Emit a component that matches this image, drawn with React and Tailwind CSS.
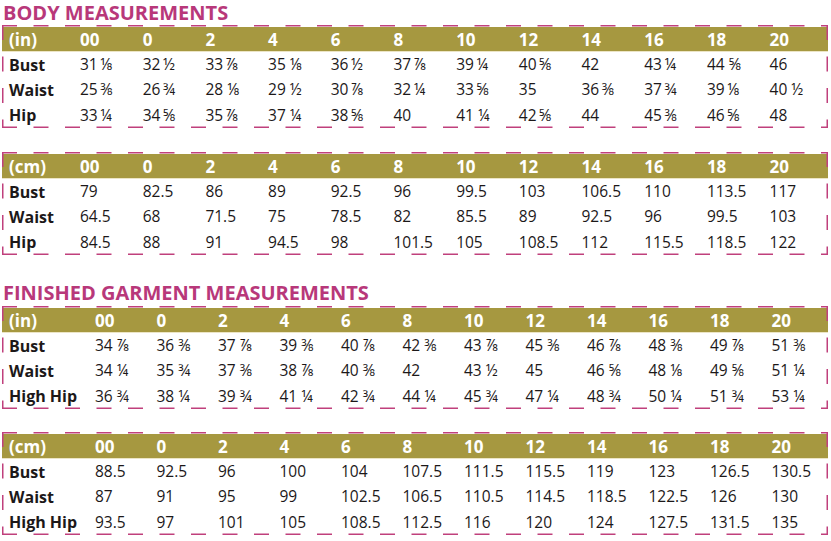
const SIZES = ['00', '0', '2', '4', '6', '8', '10', '12', '14', '16', '18', '20'];

const t = '\u2009';

const bodyIn = [
  ['Bust', [`31${t}⅛`, `32${t}½`, `33${t}⅞`, '35 ⅛', `36${t}½`, `37${t}⅞`, `39${t}¼`, `40${t}⅝`, '42', `43${t}¼`, '44 ⅝', '46']],
  ['Waist', [`25${t}⅜`, `26${t}¾`, '28 ⅛', '29 ½', `30${t}⅞`, `32${t}¼`, `33${t}⅝`, '35', `36${t}⅜`, `37${t}¾`, `39${t}⅛`, '40 ½']],
  ['Hip', [`33${t}¼`, `34${t}⅝`, `35${t}⅞`, '37 ¼', `38${t}⅝`, '40', '41 ¼', `42${t}⅝`, '44', `45${t}⅜`, `46${t}⅝`, '48']],
];

const bodyCm = [
  ['Bust', ['79', '82.5', '86', '89', '92.5', '96', '99.5', '103', '106.5', '110', '113.5', '117']],
  ['Waist', ['64.5', '68', '71.5', '75', '78.5', '82', '85.5', '89', '92.5', '96', '99.5', '103']],
  ['Hip', ['84.5', '88', '91', '94.5', '98', '101.5', '105', '108.5', '112', '115.5', '118.5', '122']],
];

const finishedIn = [
  ['Bust', ['34 ⅞', '36 ⅜', '37 ⅞', '39 ⅜', '40 ⅞', '42 ⅜', '43 ⅞', '45 ⅜', '46 ⅞', '48 ⅜', '49 ⅞', '51 ⅜']],
  ['Waist', ['34 ¼', '35 ¾', '37 ⅜', '38 ⅞', '40 ⅜', '42', '43 ½', '45', '46 ⅝', '48 ⅛', '49 ⅝', '51 ¼']],
  ['High Hip', ['36 ¾', '38 ¼', '39 ¾', '41 ¼', '42 ¾', '44 ¼', '45 ¾', '47 ¼', '48 ¾', '50 ¼', '51 ¾', '53 ¼']],
];

const finishedCm = [
  ['Bust', ['88.5', '92.5', '96', '100', '104', '107.5', '111.5', '115.5', '119', '123', '126.5', '130.5']],
  ['Waist', ['87', '91', '95', '99', '102.5', '106.5', '110.5', '114.5', '118.5', '122.5', '126', '130']],
  ['High Hip', ['93.5', '97', '101', '105', '108.5', '112.5', '116', '120', '124', '127.5', '131.5', '135']],
];

// dashed pink frame drawn over the table box
function DashedFrame() {
  const dash = { stroke: '#c0407c', strokeWidth: 1.5, strokeDasharray: '15 16.5' };
  return (
    <svg className="pointer-events-none absolute inset-0 h-full w-full" viewBox="0 0 826 103" preserveAspectRatio="none">
      <line x1="0" y1="0.75" x2="826" y2="0.75" style={dash} />
      <line x1="0" y1="102.25" x2="826" y2="102.25" style={dash} />
      <line x1="0.75" y1="0" x2="0.75" y2="103" style={dash} />
      <line x1="825.25" y1="0" x2="825.25" y2="103" style={dash} />
    </svg>
  );
}

function SizeTable({ unit, rows, cols }) {
  return (
    <div className="relative ml-[2px] h-[103px] w-[826px] pt-[1.5px]">
      <div className={`grid h-[24.5px] items-center bg-[#a69840] text-[17px] font-bold text-white ${cols}`}>
        <div className="pl-[7px]">({unit})</div>
        {SIZES.map((s) => (
          <div key={s}>{s}</div>
        ))}
      </div>
      <div className="h-px bg-[#ece5c6]" />
      {rows.map(([label, vals]) => (
        <div key={label} className={`grid h-[25.33px] items-center text-[#1c1819] ${cols}`}>
          <div className="pl-[7px] text-[16px] font-bold">{label}</div>
          {vals.map((v, i) => (
            <div key={i} className="text-[15.5px] font-medium whitespace-nowrap">{v}</div>
          ))}
        </div>
      ))}
      <DashedFrame />
    </div>
  );
}

export default function App() {
  const bodyCols = 'grid-cols-[78px_repeat(11,62.7px)_1fr]';
  const finCols = 'grid-cols-[93px_repeat(11,61.5px)_1fr]';

  return (
    <div className="h-[541px] w-[831px] overflow-hidden bg-white font-['Open_Sans',sans-serif]">
      {/* Body */}
      <div className="h-[25px] pl-[3px] text-[20px] font-bold leading-[25px] text-[#b8387a]">
        BODY MEASUREMENTS
      </div>
      <SizeTable unit="in" rows={bodyIn} cols={bodyCols} />
      <div className="h-[24px]" />
      <SizeTable unit="cm" rows={bodyCm} cols={bodyCols} />

      {/* Finished garment */}
      <div className="mt-[25px] h-[26px] pl-[3px] text-[20px] font-bold leading-[25px] text-[#b8387a]">
        FINISHED GARMENT MEASUREMENTS
      </div>
      <SizeTable unit="in" rows={finishedIn} cols={finCols} />
      <div className="h-[23px]" />
      <SizeTable unit="cm" rows={finishedCm} cols={finCols} />
    </div>
  );
}
